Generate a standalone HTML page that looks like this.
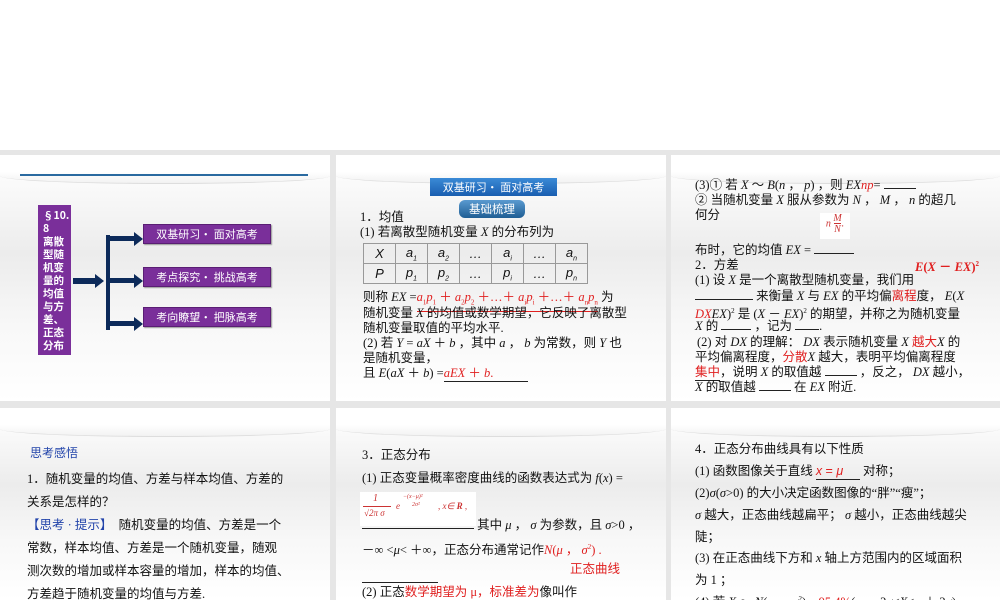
<!DOCTYPE html>
<html><head><meta charset="utf-8"><style>
body{margin:0;width:1000px;height:600px;background:#fff;position:relative;overflow:hidden;font-family:"Liberation Serif","Noto Serif CJK SC","Noto Sans CJK SC",serif;color:#111}
.bg{position:absolute;left:0;top:150px;width:1000px;height:450px;background:#e6e6e6}
.s{position:absolute;background:linear-gradient(#fff 0%,#fafafa 12%,#ececec 40%,#f8f8f8 70%,#fff 100%);overflow:hidden}
.s:before{content:"";position:absolute;left:0;top:0;width:100%;height:28px;background:linear-gradient(#fff,#fff 60%,#f2f2f2);border-bottom:1px solid #ddd;border-radius:0 0 50% 50%/0 0 8px 8px}
.l{position:absolute;font-size:12.5px;white-space:nowrap;line-height:15px;font-family:"Liberation Serif","Noto Sans CJK SC",serif}
.r{color:#e02020}
.btn{position:absolute;background:#7a2f9a;color:#fff;font-family:"Noto Sans CJK SC",sans-serif;font-size:11px;text-align:center;border:1px solid #5a1e74;box-shadow:1px 1px 1px #999}
.u{display:inline-block;border-bottom:1px solid #222}
table{position:absolute;border-collapse:collapse;font-size:13px;font-family:"Liberation Sans",sans-serif;font-style:italic}
td{border:1px solid #999;width:31px;height:19px;text-align:center;padding:0}
</style></head><body>
<div class="bg"></div>

<!-- slide 1 -->
<div class="s" style="left:0;top:155px;width:330px;height:246px">
 <div style="position:absolute;left:20px;top:19px;width:288px;height:2px;background:#2a6aa0"></div>
 <div style="position:absolute;left:38px;top:50px;width:33px;height:150px;background:#7a2f9a;color:#fff;font-family:'Noto Sans CJK SC',sans-serif;font-size:10.5px;line-height:13px;padding:4px 0 0 5px;box-sizing:border-box;font-weight:bold">§10.<br>8<br>离散型随机变量的均值与方差、正态分布</div>
 <div style="position:absolute;left:73px;top:123px;width:22px;height:6px;background:#0c2a5a"></div>
 <div style="position:absolute;left:95px;top:119px;border-left:9px solid #0c2a5a;border-top:7px solid transparent;border-bottom:7px solid transparent"></div>
 <div style="position:absolute;left:106px;top:80px;width:4px;height:95px;background:#0c2a5a"></div>
 <div style="position:absolute;left:108px;top:81px;width:28px;height:5px;background:#0c2a5a"></div>
 <div style="position:absolute;left:134px;top:77px;border-left:9px solid #0c2a5a;border-top:7px solid transparent;border-bottom:7px solid transparent"></div>
 <div style="position:absolute;left:108px;top:123px;width:28px;height:5px;background:#0c2a5a"></div>
 <div style="position:absolute;left:134px;top:119px;border-left:9px solid #0c2a5a;border-top:7px solid transparent;border-bottom:7px solid transparent"></div>
 <div style="position:absolute;left:108px;top:166px;width:28px;height:5px;background:#0c2a5a"></div>
 <div style="position:absolute;left:134px;top:162px;border-left:9px solid #0c2a5a;border-top:7px solid transparent;border-bottom:7px solid transparent"></div>
 <div class="btn" style="left:143px;top:69px;width:126px;height:18px;line-height:18px">双基研习• 面对高考</div>
 <div class="btn" style="left:143px;top:112px;width:126px;height:18px;line-height:18px">考点探究• 挑战高考</div>
 <div class="btn" style="left:143px;top:152px;width:126px;height:18px;line-height:18px">考向瞭望• 把脉高考</div>
</div>

<!-- slide 2 -->
<div class="s" style="left:336px;top:155px;width:330px;height:246px">
 <div style="position:absolute;left:94px;top:23px;width:127px;height:18px;background:linear-gradient(#3a8ad6,#1a5eb0);color:#fff;font-family:'Noto Sans CJK SC',sans-serif;font-size:11px;text-align:center;line-height:18px">双基研习• 面对高考</div>
 <div style="position:absolute;left:123px;top:45px;width:66px;height:18px;background:linear-gradient(#5a9ad0,#1f5e94);color:#fff;font-family:'Noto Sans CJK SC',sans-serif;font-size:11.5px;text-align:center;line-height:18px;border-radius:6px">基础梳理</div>
 <div class="l" style="left:24px;top:55px">1．均值</div>
 <div class="l" style="left:24px;top:70px">(1) 若离散型随机变量 <i>X</i> 的分布列为</div>
 <table style="left:27px;top:88px"><tr><td>X</td><td>a<sub style="font-size:7px">1</sub></td><td>a<sub style="font-size:7px">2</sub></td><td>…</td><td>a<sub style="font-size:7px">i</sub></td><td>…</td><td>a<sub style="font-size:7px">n</sub></td></tr><tr><td>P</td><td>p<sub style="font-size:7px">1</sub></td><td>p<sub style="font-size:7px">2</sub></td><td>…</td><td>p<sub style="font-size:7px">i</sub></td><td>…</td><td>p<sub style="font-size:7px">n</sub></td></tr></table>
 <div class="l" style="left:27px;top:135px">则称 <i>EX</i> =<span class="r u" style="border-color:#e02020"><i>a</i><sub style="font-size:7px">1</sub><i>p</i><sub style="font-size:7px">1</sub> ＋ <i>a</i><sub style="font-size:7px">2</sub><i>p</i><sub style="font-size:7px">2</sub> ＋…＋ <i>a</i><sub style="font-size:7px">i</sub><i>p</i><sub style="font-size:7px">i</sub> ＋…＋ <i>a</i><sub style="font-size:7px">n</sub><i>p</i><sub style="font-size:7px">n</sub></span> 为</div>
 <div class="l" style="left:27px;top:151px">随机变量 <i>X</i> 的均值或数学期望，它反映了离散型</div>
 <div class="l" style="left:27px;top:166px">随机变量取值的平均水平.</div>
 <div class="l" style="left:27px;top:181px">(2) 若 <i>Y</i> = <i>aX</i> ＋ <i>b</i> ，其中 <i>a</i> ， <i>b</i> 为常数，则 <i>Y</i> 也</div>
 <div class="l" style="left:27px;top:196px">是随机变量，</div>
 <div class="l" style="left:27px;top:211px">且 <i>E</i>(<i>aX</i> ＋ <i>b</i>) =<span class="u r" style="width:84px;border-color:#222"><i>aEX</i> ＋ <i>b</i>.</span></div>
</div>

<!-- slide 3 -->
<div class="s" style="left:671px;top:155px;width:329px;height:246px">
 <div class="l" style="left:24px;top:23px">(3)① 若 <i>X</i> ～ <i>B</i>(<i>n</i> ， <i>p</i>) ，则 <i>EX</i><span class="r"><i>np</i></span>= <span class="u" style="width:32px"></span></div>
 <div class="l" style="left:24px;top:38px">② 当随机变量 <i>X</i> 服从参数为 <i>N</i> ， <i>M</i> ， <i>n</i> 的超几</div>
 <div class="l" style="left:24px;top:53px">何分</div>
 <div style="position:absolute;left:149px;top:58px;width:30px;height:26px;background:#fff;color:#c33;font-size:10px;font-family:'Liberation Serif',serif;font-style:italic;line-height:11px;text-align:center">n <span style="display:inline-block;vertical-align:middle">M<br><span style="border-top:1px solid #c33">N</span></span>.</div>
 <div class="l" style="left:24px;top:88px">布时，它的均值 <i>EX</i> = <span class="u" style="width:40px"></span></div>
 <div class="l" style="left:24px;top:103px">2．方差</div>
 <div class="l r" style="left:244px;top:102px;font-weight:bold"><i>E</i>(<i>X</i> － <i>EX</i>)<sup style="font-size:7px">2</sup></div>
 <div class="l" style="left:24px;top:118px">(1) 设 <i>X</i> 是一个离散型随机变量，我们用</div>
 <div class="l" style="left:24px;top:134px"><span class="u" style="width:58px"></span> 来衡量 <i>X</i> 与 <i>EX</i> 的平均偏<span class="r">离程</span>度， <i>E</i>(<i>X</i></div>
 <div class="l" style="left:24px;top:149px"><span class="r"><i>DX</i></span><i>EX</i>)<sup style="font-size:7px">2</sup> 是 (<i>X</i> － <i>EX</i>)<sup style="font-size:7px">2</sup> 的期望，并称之为随机变量</div>
 <div class="l" style="left:24px;top:164px"><i>X</i> 的 <span class="u" style="width:30px"></span> ，记为 <span class="u" style="width:24px"></span>.</div>
 <div class="l" style="left:26px;top:180px">(2) 对 <i>DX</i> 的理解： <i>DX</i> 表示随机变量 <i>X</i> <span class="r">越大</span><i>X</i> 的</div>
 <div class="l" style="left:24px;top:195px">平均偏离程度，<span class="r">分散</span><i>X</i> 越大，表明平均偏离程度</div>
 <div class="l" style="left:24px;top:210px"><span class="r u" style="border-color:#222">集中</span>，说明 <i>X</i> 的取值越 <span class="u" style="width:32px"></span> ，反之， <i>DX</i> 越小，</div>
 <div class="l" style="left:24px;top:225px"><i>X</i> 的取值越 <span class="u" style="width:32px"></span> 在 <i>EX</i> 附近.</div>
</div>

<!-- slide 4 -->
<div class="s" style="left:0;top:408px;width:330px;height:192px">
 <div class="l" style="left:30px;top:37px;color:#2244aa;font-family:'Noto Sans CJK SC',sans-serif;font-size:12px">思考感悟</div>
 <div class="l" style="left:27px;top:64px">1．随机变量的均值、方差与样本均值、方差的</div>
 <div class="l" style="left:27px;top:87px">关系是怎样的？</div>
 <div class="l" style="left:27px;top:110px"><span style="color:#2244aa">【思考 · 提示】</span>　随机变量的均值、方差是一个</div>
 <div class="l" style="left:27px;top:133px">常数，样本均值、方差是一个随机变量，随观</div>
 <div class="l" style="left:27px;top:156px">测次数的增加或样本容量的增加，样本的均值、</div>
 <div class="l" style="left:27px;top:179px">方差趋于随机变量的均值与方差.</div>
</div>

<!-- slide 5 -->
<div class="s" style="left:336px;top:408px;width:330px;height:192px">
 <div class="l" style="left:26px;top:40px">3．正态分布</div>
 <div class="l" style="left:26px;top:63px">(1) 正态变量概率密度曲线的函数表达式为 <i>f</i>(<i>x</i>) =</div>
 <div style="position:absolute;left:24px;top:84px;width:116px;height:34px;background:#fff;color:#c33;font-family:'Liberation Serif',serif;font-style:italic">
  <span style="position:absolute;left:13px;top:1px;font-size:10px">1</span>
  <span style="position:absolute;left:3px;top:14px;width:28px;border-top:1px solid #c33"></span>
  <span style="position:absolute;left:4px;top:16px;font-size:9px">√2π σ</span>
  <span style="position:absolute;left:36px;top:9px;font-size:9px">e</span>
  <span style="position:absolute;left:43px;top:2px;font-size:6px">−(x−μ)²</span>
  <span style="position:absolute;left:52px;top:10px;font-size:6px">2σ²</span>
  <span style="position:absolute;left:78px;top:9px;font-size:9px">, x∈ <b>R</b> ,</span>
 </div>
 <div class="l" style="left:26px;top:110px"><span class="u" style="width:112px"></span> 其中 <i>μ</i> ， <i>σ</i> 为参数，且 <i>σ</i>&gt;0 ，</div>
 <div class="l" style="left:26px;top:132px">－∞ &lt;<i>μ</i>&lt; ＋∞，正态分布通常记作<span class="r"><i>N</i>(<i>μ</i> ， <i>σ</i><sup style="font-size:7px">2</sup>) .</span></div>
 <div class="l r" style="left:234px;top:152px;font-family:'Noto Sans CJK SC',sans-serif">正态曲线</div>
 <div style="position:absolute;left:26px;top:174px;width:76px;border-top:1px solid #222"></div>
 <div class="l" style="left:26px;top:177px">(2) 正态<span class="r">数学期望为 μ，标准差为</span>像叫作</div>
</div>

<!-- slide 6 -->
<div class="s" style="left:671px;top:408px;width:329px;height:192px">
 <div class="l" style="left:24px;top:34px">4．正态分布曲线具有以下性质</div>
 <div class="l" style="left:24px;top:56px">(1) 函数图像关于直线 <span class="u r" style="width:44px;border-color:#222;font-family:'Liberation Sans',sans-serif"><i>x</i> = <i>μ</i></span> 对称；</div>
 <div class="l" style="left:24px;top:78px">(2)<i>σ</i>(<i>σ</i>&gt;0) 的大小决定函数图像的“胖”“瘦”；</div>
 <div class="l" style="left:24px;top:100px"><i>σ</i> 越大，正态曲线越扁平； <i>σ</i> 越小，正态曲线越尖</div>
 <div class="l" style="left:24px;top:122px">陡；</div>
 <div class="l" style="left:24px;top:143px">(3) 在正态曲线下方和 <i>x</i> 轴上方范围内的区域面积</div>
 <div class="l" style="left:24px;top:165px">为 1 ；</div>
 <div class="l" style="left:24px;top:184px">(4) 若 <i>X</i> ～ <i>N</i>(<i>μ</i> ， <i>σ</i><sup style="font-size:7px">2</sup>)，<span class="r">95.4%</span>(<i>μ</i> － 2<i>σ</i>&lt;<i>X</i>&lt;<i>μ</i> ＋ 2<i>σ</i>) =</div>
</div>
</body></html>
